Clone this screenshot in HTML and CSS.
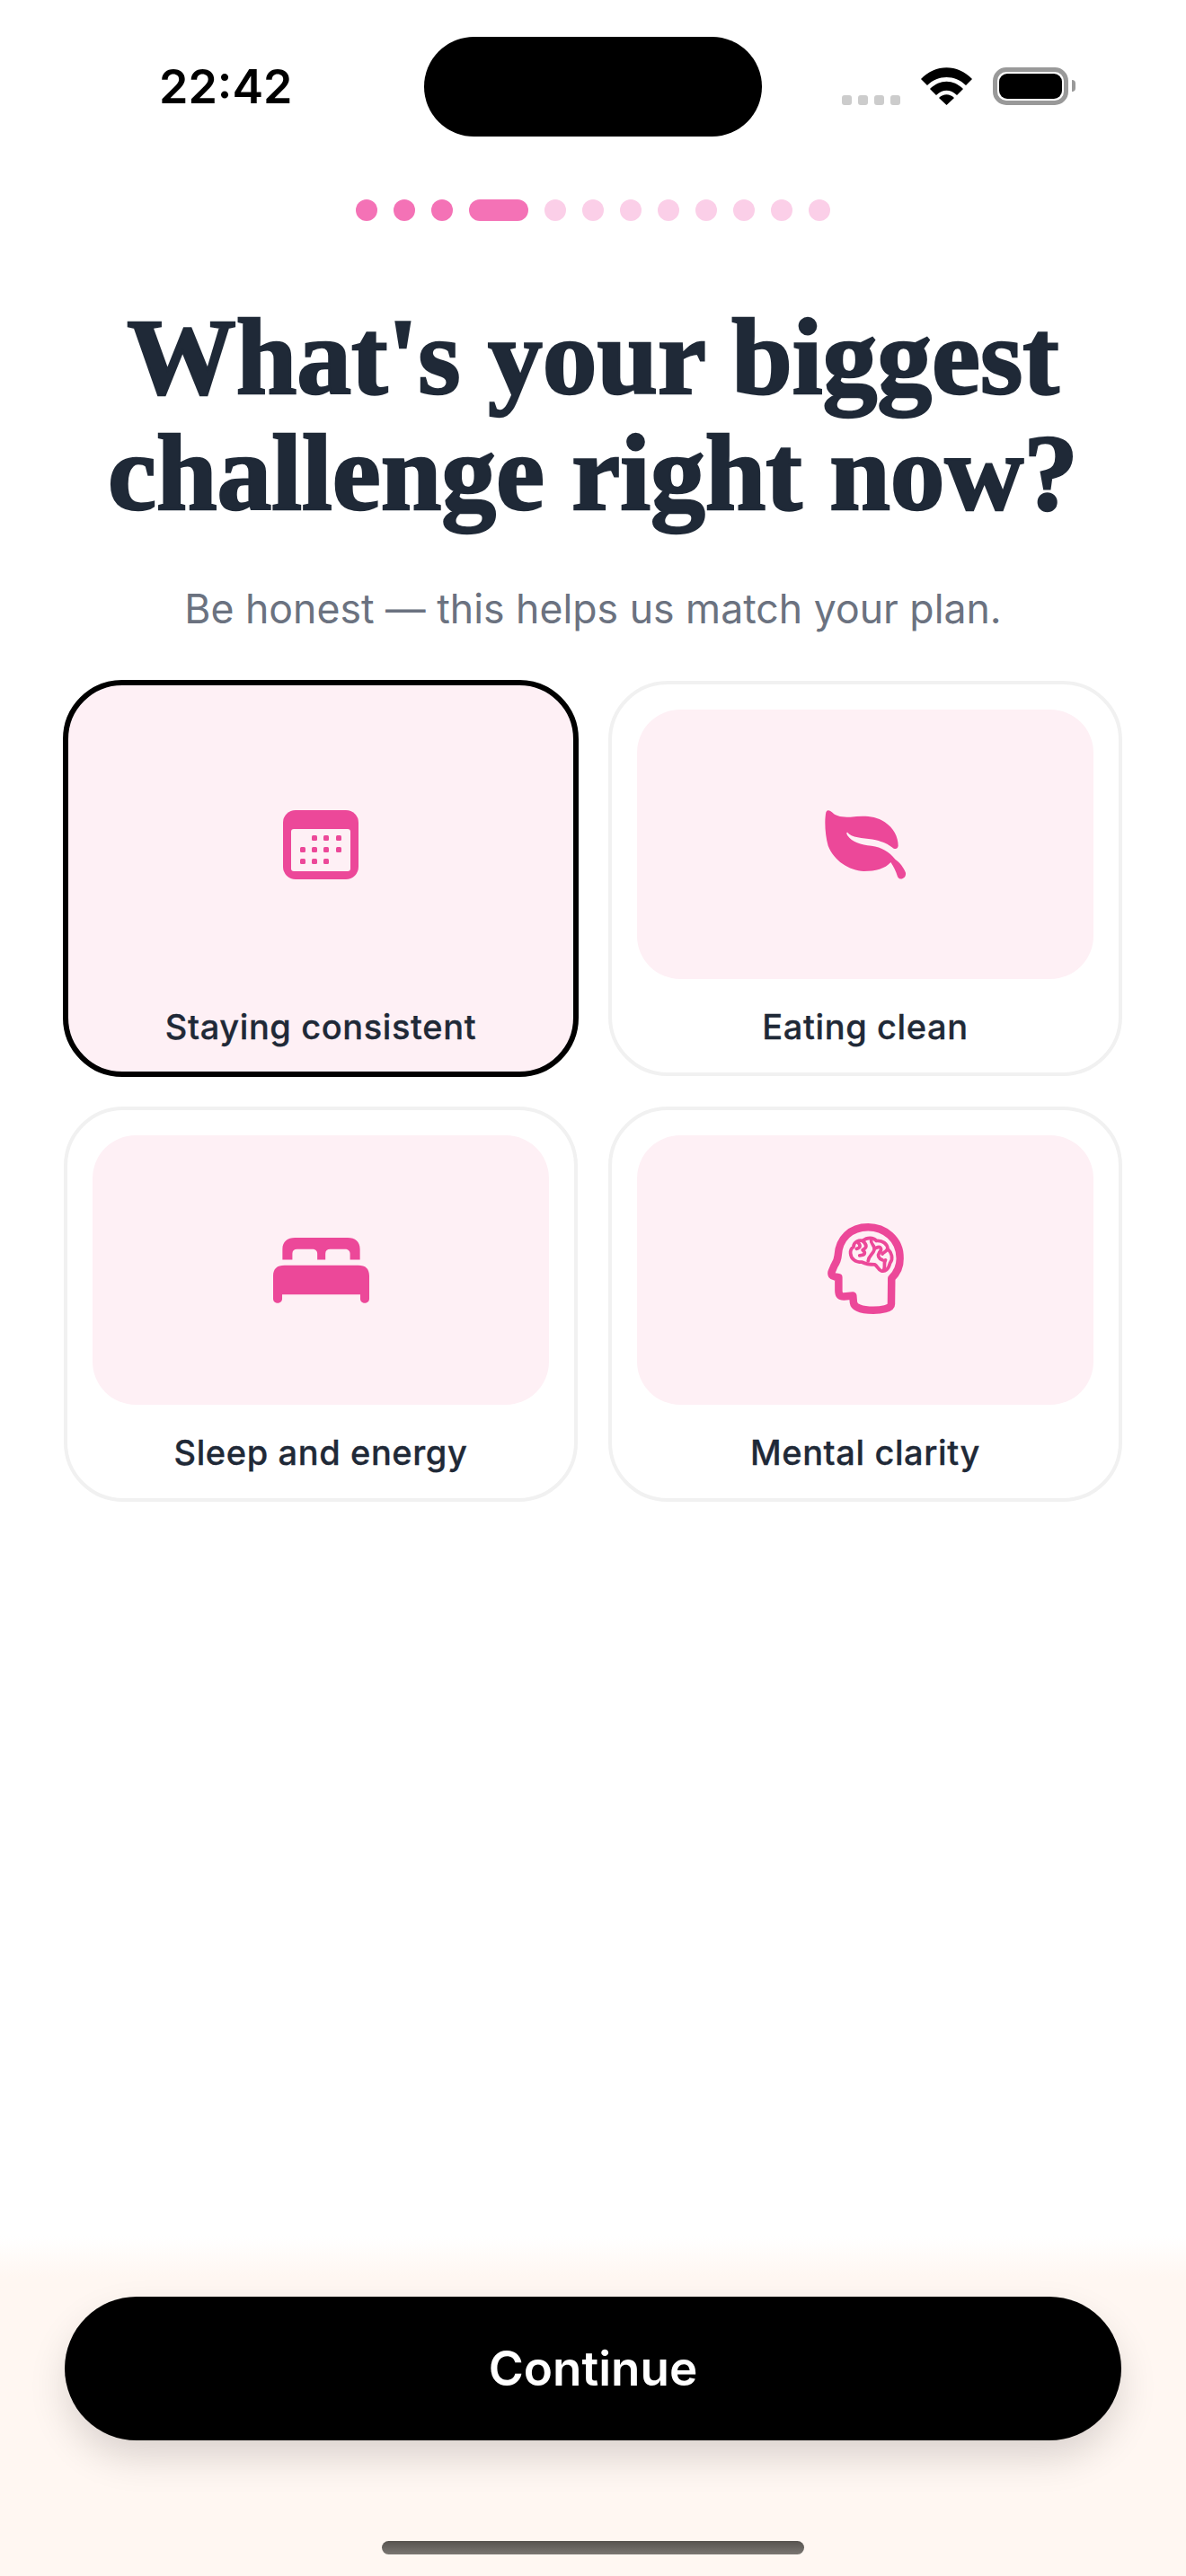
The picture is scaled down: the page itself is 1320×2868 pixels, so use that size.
FILE: index.html
```html
<!DOCTYPE html>
<html lang="en">
<head>
<meta charset="utf-8">
<title>Biggest challenge</title>
<link rel="stylesheet" href="styles.css">
</head>
<body>
<div class="screen">
  <header class="status">
    <div class="status-left"><span class="time">22:42</span></div>
    <div class="island"></div>
    <div class="status-right">
      <div class="signal"><i></i><i></i><i></i><i></i></div>
      <svg class="wifi" viewBox="0 0 57 42"><path d="M0 13 C16 -4 41 -4 57 13 L50 20 C38 8 19 8 7 20 Z M10 24 C21 13 36 13 47 24 L40 31 C33 24 24 24 17 31 Z M20 34 C25 29 32 29 37 34 L28.500 42 Z"/></svg>
      <div class="battery"><div class="battery-fill"></div></div>
      <div class="battery-nub"></div>
    </div>
  </header>

  <div class="dots">
    <i class="dot on"></i><i class="dot on"></i><i class="dot on"></i><i class="dot on wide"></i>
    <i class="dot"></i><i class="dot"></i><i class="dot"></i><i class="dot"></i><i class="dot"></i><i class="dot"></i><i class="dot"></i><i class="dot"></i>
  </div>

  <h1 class="title">What's your biggest<br>challenge right now?</h1>
  <p class="subtitle">Be honest — this helps us match your plan.</p>

  <div class="grid">
    <div class="card selected">
      <div class="tile">
        <svg class="icon" width="84" height="77" viewBox="0 0 84 77">
          <rect width="84" height="77" rx="14" fill="#ec4899"/>
          <rect x="9" y="21" width="66" height="47" rx="3" fill="#fef0f5"/>
          <g fill="#ec4899">
            <rect x="32" y="28" width="6" height="6" rx="1.500"/><rect x="45" y="28" width="6" height="6" rx="1.500"/><rect x="59" y="28" width="6" height="6" rx="1.500"/>
            <rect x="19" y="41" width="6" height="6" rx="1.500"/><rect x="32" y="41" width="6" height="6" rx="1.500"/><rect x="45" y="41" width="6" height="6" rx="1.500"/><rect x="59" y="41" width="6" height="6" rx="1.500"/>
            <rect x="19" y="54" width="6" height="6" rx="1.500"/><rect x="32" y="54" width="6" height="6" rx="1.500"/><rect x="45" y="54" width="6" height="6" rx="1.500"/>
          </g>
        </svg>
      </div>
      <div class="label">Staying consistent</div>
    </div>
    <div class="card">
      <div class="tile">
        <svg class="icon" width="91" height="77" viewBox="85 65 272 232">
          <path fill="#ec4899" d="M88 72 C92 62 100 65 108 72 C120 85 140 90 170 88 C210 84 250 82 285 105 C315 125 330 155 330 185 C328 197 318 197 310 190 C296 178 280 172 255 165 C225 160 185 160 165 145 C158 135 154 140 160 150 C175 172 205 180 240 185 C275 190 300 205 320 230 C335 240 350 260 355 275 C358 295 335 303 328 288 C322 270 315 255 305 240 C285 262 255 270 215 270 C165 268 115 235 95 185 C85 150 82 100 88 72 Z"/>
        </svg>
      </div>
      <div class="label">Eating clean</div>
    </div>
    <div class="card">
      <div class="tile">
        <svg class="icon" width="107" height="73" viewBox="42 82 320 218">
          <path fill="#ec4899" d="M73 155 V120 C73 95 90 82 115 82 H290 C315 82 331 95 331 120 V155 H298 V135 C298 125 290 120 282 120 H232 C222 120 216 125 216 135 V155 H189 V135 C189 125 182 120 172 120 H122 C112 120 106 125 106 135 V155 Z M42 210 C42 185 55 174 80 174 H325 C350 174 362 185 362 210 V285 C362 304 332 304 332 285 V271 H72 V285 C72 304 42 304 42 285 Z"/>
        </svg>
      </div>
      <div class="label">Sleep and energy</div>
    </div>
    <div class="card">
      <div class="tile">
        <svg class="icon head" width="83" height="99" viewBox="65 55 250 297" fill="none" stroke="#ec4899" stroke-linejoin="round" stroke-linecap="round">
          <path stroke-width="25" d="M303 170 C303 105 250 67 198 67 C140 67 102 105 99 160 C98 175 94 182 87 193 L78 214 C75 222 79 228 89 230 L101 232 V275 C101 288 106 295 118 295 L148 292 L150 315 C152 330 175 340 215 340 C240 340 274 335 274 320 L275 235 C295 215 303 195 303 170 Z"/>
          <path stroke-width="11" d="M152 175 C138 165 135 140 150 132 C150 115 170 108 180 112 C195 100 215 100 225 112 C245 110 262 122 262 138 C275 150 282 170 270 185 C265 205 255 215 240 210 C230 205 228 195 220 190 C205 190 190 188 178 182 C170 182 160 182 152 175 Z"/>
          <path stroke-width="11" d="M165 118 C175 128 172 135 160 138 M180 112 C195 125 195 135 180 142 M180 142 C190 150 190 160 170 160 M208 108 C205 125 222 125 218 142 C215 155 200 160 198 178 M225 135 C240 128 245 140 235 150 C228 160 232 170 245 175 M262 138 C255 150 248 150 245 155 M255 175 C248 185 255 195 250 205"/>
        </svg>
      </div>
      <div class="label">Mental clarity</div>
    </div>
  </div>

  <footer class="footer">
    <button class="cta">Continue</button>
    <div class="home"></div>
  </footer>
</div>
</body>
</html>
```
FILE: styles.css
```css
* { box-sizing: border-box; }
html, body { margin: 0; padding: 0; background: #fff; }
.screen {
  width: 1320px;
  height: 2868px;
  display: flex;
  flex-direction: column;
  overflow: hidden;
  font-family: "Inter", "Liberation Sans", sans-serif;
}
.status { display: flex; height: 152px; padding-top: 41px; flex: none; }
.status-left { width: 472px; padding-left: 177px; height: 111px; display: flex; align-items: center; }
.time { font-size: 52px; font-weight: 600; color: #000; }
.island { width: 376px; height: 111px; border-radius: 56px; background: #000; }
.status-right { height: 42px; margin-top: 34px; display: flex; align-items: flex-end; padding-left: 89px; }
.signal { display: flex; gap: 7px; width: 65px; }
.signal i { width: 11px; height: 11px; border-radius: 3px; background: #ccc; }
.wifi { width: 57px; height: 42px; margin-left: 23px; fill: #000; display: block; }
.battery { width: 84px; height: 42px; margin-left: 23px; border: 5px solid #999; border-radius: 15px; padding: 2px; }
.battery-fill { height: 100%; background: #000; border-radius: 9px; }
.battery-nub { width: 4px; height: 13px; margin: 0 0 15px 4px; background: #999; border-radius: 0 4px 4px 0; }

.dots { display: flex; justify-content: center; gap: 18px; margin-top: 70px; flex: none; }
.dot { width: 24px; height: 24px; border-radius: 12px; background: #fbcfe8; }
.dot.on { background: #f472b6; }
.dot.wide { width: 66px; }

.title {
  margin: 87px 0 0;
  font-family: "Liberation Serif", serif;
  font-weight: 700;
  font-size: 121.5px;
  line-height: 129px;
  color: #1f2937;
  -webkit-text-stroke: 2.5px #1f2937;
  text-align: center;
  white-space: nowrap;
}
.subtitle {
  margin: 57px 0 0;
  font-size: 44.6px;
  line-height: 60px;
  font-weight: 400;
  color: #6b7280;
  text-align: center;
}
.grid {
  display: grid;
  grid-template-columns: 1fr 1fr;
  gap: 34px;
  padding: 0 71px;
  margin-top: 50px;
  flex: none;
}
.card {
  height: 440px;
  border: 4px solid #f1f1f1;
  border-radius: 66px;
  padding: 28px 28px 0;
  background: #fff;
  display: flex;
  flex-direction: column;
}
.card.selected {
  margin: -1px;
  height: 442px;
  border: 6px solid #000;
  background: #fef0f5;
  padding: 27px 27px 0;
}
.tile {
  height: 300px;
  flex: none;
  border-radius: 48px;
  background: #fef0f5;
  display: flex;
  align-items: center;
  justify-content: center;
}
.icon { display: block; }
.head { transform: translateY(-2px) scale(1.02); }
.label {
  margin-top: 30px;
  font-size: 38px;
  line-height: 46px;
  font-weight: 500;
  letter-spacing: 0.6px;
  color: #1f2937;
  text-align: center;
  -webkit-text-stroke: 0.3px #1f2937;
}
.footer {
  margin-top: auto;
  height: 378px;
  flex: none;
  background: linear-gradient(#fff 0, #fff7f2 45px);
  padding: 67px 72px 0;
  display: flex;
  flex-direction: column;
  align-items: center;
}
.cta {
  width: 100%;
  height: 160px;
  flex: none;
  border: 0;
  border-radius: 80px;
  background: #000;
  color: #fff;
  font-family: inherit;
  font-size: 53px;
  font-weight: 600;
  box-shadow: 0 20px 45px -4px rgba(0, 0, 0, 0.16);
}
.home { width: 470px; height: 15px; margin-top: 112px; border-radius: 8px; background: linear-gradient(#57534f, #7a7672); }
```
